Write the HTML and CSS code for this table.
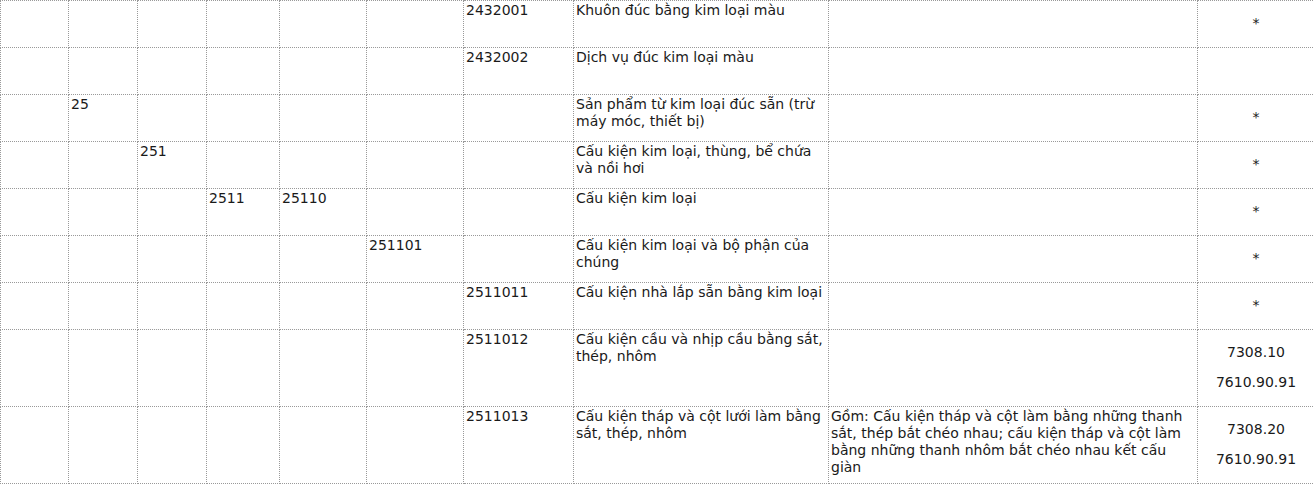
FILE: index.html
```html
<!DOCTYPE html>
<html lang="vi">
<head>
<meta charset="utf-8">
<title>Bảng mã sản phẩm</title>
<link rel="stylesheet" href="styles.css">
</head>
<body>
<table class="codes">
  <colgroup>
    <col class="c1"><col class="c2"><col class="c3"><col class="c4"><col class="c5"><col class="c6"><col class="c7"><col class="c8"><col class="c9"><col class="c10">
  </colgroup>
  <tbody>
    <tr>
      <td></td><td></td><td></td><td></td><td></td><td></td>
      <td>2432001</td>
      <td>Khuôn đúc bằng kim loại màu</td>
      <td></td>
      <td class="hs"><p>*</p></td>
    </tr>
    <tr>
      <td></td><td></td><td></td><td></td><td></td><td></td>
      <td>2432002</td>
      <td>Dịch vụ đúc kim loại màu</td>
      <td></td>
      <td class="hs"><p>&nbsp;</p></td>
    </tr>
    <tr>
      <td></td>
      <td>25</td>
      <td></td><td></td><td></td><td></td><td></td>
      <td>Sản phẩm từ kim loại đúc sẵn (trừ máy móc, thiết bị)</td>
      <td></td>
      <td class="hs"><p>*</p></td>
    </tr>
    <tr>
      <td></td><td></td>
      <td>251</td>
      <td></td><td></td><td></td><td></td>
      <td>Cấu kiện kim loại, thùng, bể chứa và nồi hơi</td>
      <td></td>
      <td class="hs"><p>*</p></td>
    </tr>
    <tr>
      <td></td><td></td><td></td>
      <td>2511</td>
      <td>25110</td>
      <td></td><td></td>
      <td>Cấu kiện kim loại</td>
      <td></td>
      <td class="hs"><p>*</p></td>
    </tr>
    <tr>
      <td></td><td></td><td></td><td></td><td></td>
      <td>251101</td>
      <td></td>
      <td>Cấu kiện kim loại và bộ phận của chúng</td>
      <td></td>
      <td class="hs"><p>*</p></td>
    </tr>
    <tr>
      <td></td><td></td><td></td><td></td><td></td><td></td>
      <td>2511011</td>
      <td>Cấu kiện nhà lắp sẵn bằng kim loại</td>
      <td></td>
      <td class="hs"><p>*</p></td>
    </tr>
    <tr>
      <td></td><td></td><td></td><td></td><td></td><td></td>
      <td>2511012</td>
      <td>Cấu kiện cầu và nhịp cầu bằng sắt, thép, nhôm</td>
      <td></td>
      <td class="hs"><p>7308.10</p><p>7610.90.91</p></td>
    </tr>
    <tr>
      <td></td><td></td><td></td><td></td><td></td><td></td>
      <td>2511013</td>
      <td>Cấu kiện tháp và cột lưới làm bằng sắt, thép, nhôm</td>
      <td>Gồm: Cấu kiện tháp và cột làm bằng những thanh sắt, thép bắt chéo nhau; cấu kiện tháp và cột làm bằng những thanh nhôm bắt chéo nhau kết cấu giàn</td>
      <td class="hs"><p>7308.20</p><p>7610.90.91</p></td>
    </tr>
  </tbody>
</table>
</body>
</html>
```

FILE: styles.css
```css
html, body {
  margin: 0;
  padding: 0;
  background: #ffffff;
}

.codes {
  border-collapse: collapse;
  table-layout: fixed;
  width: 1314px;
  font-family: "DejaVu Sans", Verdana, sans-serif;
  font-size: 14px;
  line-height: 17px;
  color: #1a1a1a;
}

.codes td {
  border: 1px dotted #999999;
  padding: 1px 2px 2px 2px;
  vertical-align: top;
  text-align: left;
}

.codes td.hs {
  vertical-align: middle;
  text-align: center;
}

.codes td.hs p {
  margin: 13px 0;
}

.c1 { width: 68px; }
.c2 { width: 69px; }
.c3 { width: 69px; }
.c4 { width: 73px; }
.c5 { width: 87px; }
.c6 { width: 97px; }
.c7 { width: 110px; }
.c8 { width: 255px; }
.c9 { width: 369px; }
.c10 { width: 117px; }
```
